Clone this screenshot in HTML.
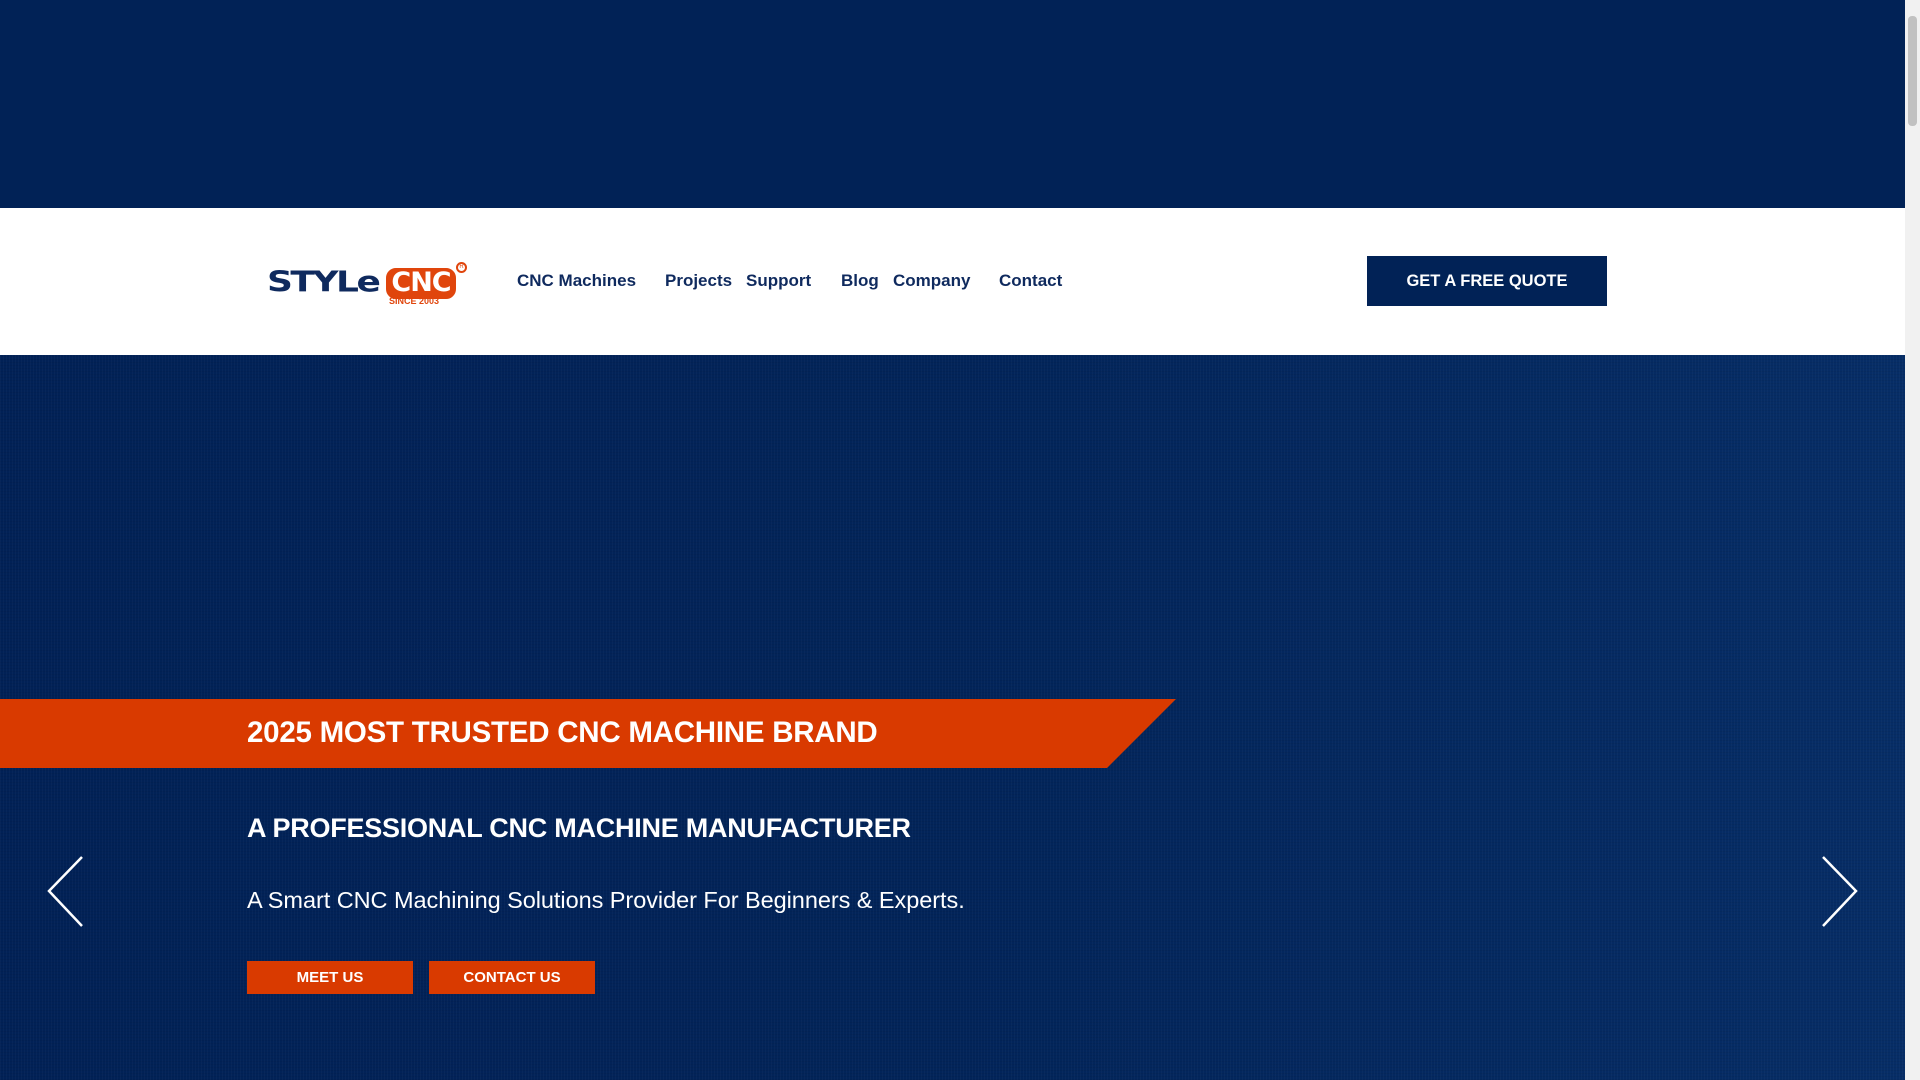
<!DOCTYPE html>
<html><head><meta charset="utf-8"><style>
*{margin:0;padding:0;box-sizing:border-box}
html,body{width:1920px;height:1080px;overflow:hidden;font-family:"Liberation Sans",Arial,sans-serif}
.top{position:absolute;left:0;top:0;width:1905px;height:208px;background:#012256}
.hdr{position:absolute;left:0;top:208px;width:1905px;height:147px;background:#fff}
.hero{position:absolute;left:0;top:355px;width:1905px;height:725px;background:linear-gradient(90deg,#012156 0%,#022459 50%,#062d66 100%)}
.hero:after{content:"";position:absolute;inset:0;background:repeating-linear-gradient(90deg,rgba(255,255,255,0.025) 0 1px,transparent 1px 3px),repeating-linear-gradient(0deg,rgba(0,0,0,0.05) 0 1px,transparent 1px 3px)}
.sb{position:absolute;right:0;top:0;width:15px;height:1080px;background:#f1f1f1}
.sb i{position:absolute;left:3px;top:16px;width:9px;height:110px;background:#c1c1c1;border-radius:4px}
.nav{position:absolute;top:271px;font-size:17px;font-weight:bold;color:#0f2a5e}
.btn{position:absolute;left:1367px;top:256px;width:240px;height:50px;background:#012256;color:#fff;font-weight:bold;font-size:16.5px;text-align:center;line-height:50px}
.band{position:absolute;left:0;top:699px;width:1176px;height:69px;background:#d93a00;clip-path:polygon(0 0,100% 0,1107px 100%,0 100%)}
.t1{position:absolute;left:247px;top:716px;font-size:29.5px;font-weight:bold;color:#fff;letter-spacing:-0.25px}
.t2{position:absolute;left:247px;top:813px;font-size:27px;font-weight:bold;color:#fff;letter-spacing:-0.25px}
.t3{position:absolute;left:247px;top:887px;font-size:23.5px;color:#fff;letter-spacing:-0.05px}
.b{position:absolute;top:961px;height:33px;width:166px;background:#d93a00;color:#fff;font-weight:bold;font-size:15px;text-align:center;line-height:33px}
</style></head><body>
<div class="top"></div>
<div class="hdr"></div>
<div style="position:absolute;left:267px;top:266px;font-size:36px;font-weight:900;color:#0f2a5e;font-family:'DejaVu Sans',sans-serif;letter-spacing:-2.5px;transform:scaleY(0.8);transform-origin:top left">STYLe</div>
<div style="position:absolute;left:386px;top:268px;width:70px;height:31px;border:3px solid #e0450c;border-radius:10px;background:#e0450c;color:#fff;font-size:27px;font-weight:900;line-height:24px;text-align:center;font-family:'DejaVu Sans',sans-serif;letter-spacing:-1px">CNC</div>
<div style="position:absolute;left:389px;top:296px;font-size:9px;font-weight:bold;color:#e0450c">SINCE 2003</div>
<div style="position:absolute;left:456px;top:262px;width:11px;height:11px;border:2px solid #e0450c;border-radius:50%;font-size:6px;color:#e0450c;text-align:center;line-height:7px">R</div>
<div class="nav" style="left:517px">CNC Machines</div>
<div class="nav" style="left:665px">Projects</div>
<div class="nav" style="left:746px">Support</div>
<div class="nav" style="left:841px">Blog</div>
<div class="nav" style="left:893px">Company</div>
<div class="nav" style="left:999px">Contact</div>
<div class="btn">GET A FREE QUOTE</div>
<div class="hero"></div>
<div class="band"></div>
<div class="t1">2025 MOST TRUSTED CNC MACHINE BRAND</div>
<div class="t2">A PROFESSIONAL CNC MACHINE MANUFACTURER</div>
<div class="t3">A Smart CNC Machining Solutions Provider For Beginners &amp; Experts.</div>
<div class="b" style="left:247px">MEET US</div>
<div class="b" style="left:429px">CONTACT US</div>
<svg style="position:absolute;left:45px;top:855px" width="40" height="74"><path d="M37 2 L4 36 L37 71" fill="none" stroke="#fff" stroke-width="2.5"/></svg>
<svg style="position:absolute;left:1820px;top:855px" width="40" height="74"><path d="M3 2 L36 36 L3 71" fill="none" stroke="#fff" stroke-width="2.5"/></svg>
<div class="sb"><i></i></div>
</body></html>
